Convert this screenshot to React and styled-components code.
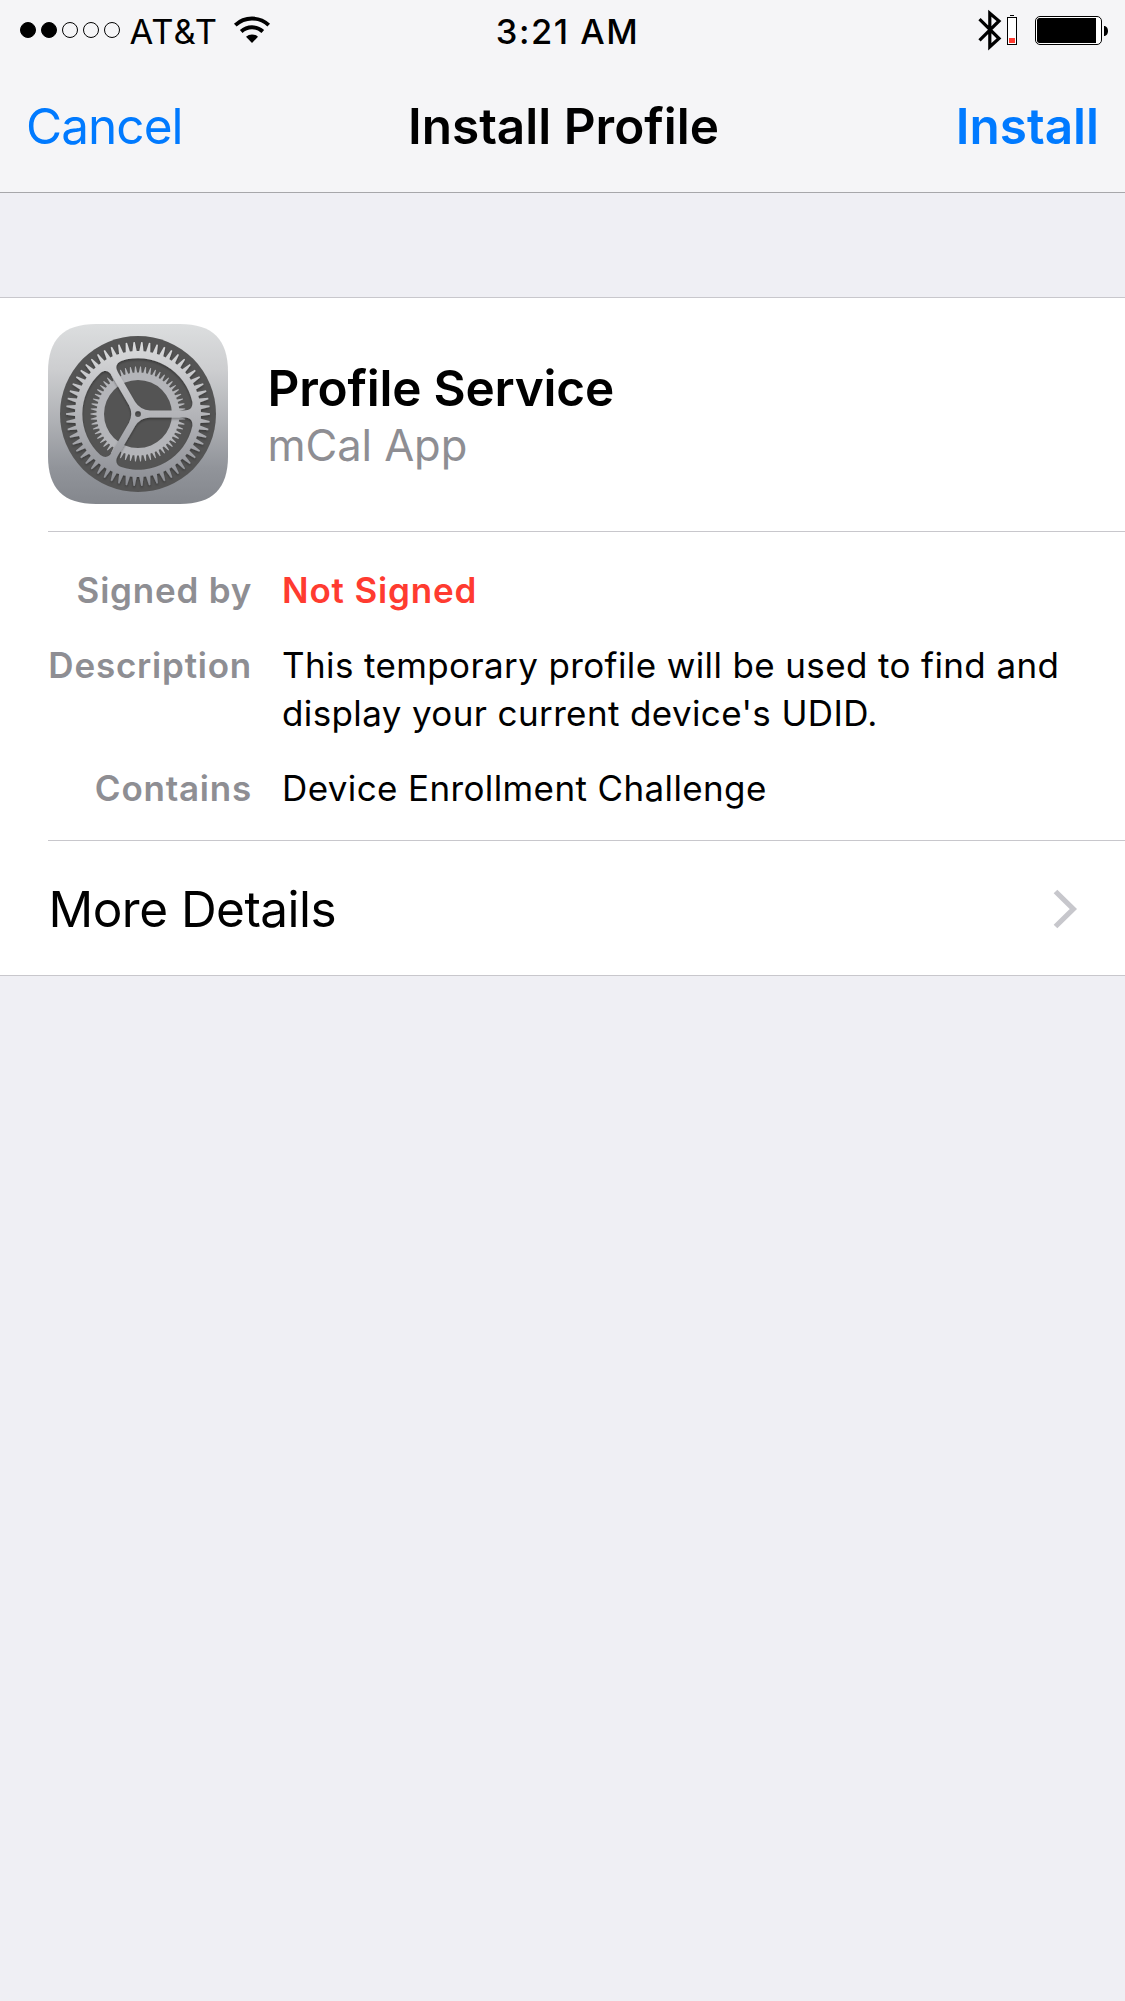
import React from "react";
import styled, { createGlobalStyle } from "styled-components";

const GlobalStyle = createGlobalStyle`
  html, body { margin: 0; padding: 0; background: #efeff4; }
  *, *::before, *::after { box-sizing: border-box; }
  button { border: 0; margin: 0; background: none; font: inherit; color: inherit; text-align: inherit; }
`;

const Screen = styled.div`
  width: 1125px;
  height: 2001px;
  background: #efeff4;
  color: #000;
  font-family: Inter, "Liberation Sans", sans-serif;
  font-variant-ligatures: none;
`;

const Header = styled.header`
  background: #f5f5f7;
  border-bottom: 1px solid #a7a7aa;
  height: 193px;
`;

const StatusBar = styled.div`
  display: grid;
  grid-template-columns: 1fr auto 1fr;
  align-items: center;
  height: 60px;
  padding: 0 17px 0 20px;
  font-size: 34.5px;
  line-height: 42px;
`;

const StatusLeft = styled.div`
  display: flex;
  align-items: center;
`;

const SignalDots = styled.div`
  display: flex;
  gap: 5px;
  margin-right: 9.5px;
`;

const Dot = styled.span`
  width: 16px;
  height: 16px;
  border-radius: 50%;
  border: 1px solid #000;
  background: ${(p) => (p.$on ? "#000" : "transparent")};
`;

const Carrier = styled.span`
  letter-spacing: 1px;
  padding-top: 3px;
  margin-right: 14.5px;
`;

const Clock = styled.time`
  font-weight: 550;
  letter-spacing: 1.5px;
  padding: 3px 0 0 7px;
`;

const StatusRight = styled.div`
  display: flex;
  justify-content: flex-end;
  align-items: center;
`;

const NavBar = styled.nav`
  display: grid;
  grid-template-columns: 1fr auto 1fr;
  align-items: center;
  height: 132px;
  padding: 0 26px;
  font-size: 49.5px;
  line-height: 60px;
`;

const NavButton = styled.button`
  padding: 0;
  color: #007aff;
  justify-self: ${(p) => (p.$primary ? "end" : "start")};
  font-weight: ${(p) => (p.$primary ? 600 : 400)};
  letter-spacing: ${(p) => (p.$primary ? "0" : "-0.95px")};
`;

const Title = styled.h1`
  margin: 0;
  padding-left: 2px;
  font-size: inherit;
  font-weight: 600;
`;

const Group = styled.section`
  margin-top: 104px;
  background: #fff;
  border-top: 1px solid #c8c7cc;
  border-bottom: 1px solid #c8c7cc;
`;

const Inset = styled.div`
  margin-left: 48px;
  border-bottom: ${(p) => (p.$last ? "0" : "1px solid #c8c7cc")};
`;

const Summary = styled(Inset)`
  display: flex;
  align-items: center;
  gap: 39.5px;
  height: 234px;
  padding-bottom: 1px;
`;

const Name = styled.h2`
  margin: 0 0 2px;
  font-size: 49.5px;
  font-weight: 600;
  line-height: 60px;
  letter-spacing: -0.22px;
`;

const Organization = styled.p`
  margin: 0;
  color: #8e8e93;
  font-size: 43.5px;
  line-height: 50px;
  letter-spacing: -0.08px;
`;

const Facts = styled(Inset).attrs({ as: "dl" })`
  display: grid;
  grid-template-columns: 204px 1fr;
  column-gap: 30px;
  row-gap: 27px;
  margin-top: 0;
  margin-bottom: 0;
  padding: 34px 40px 28px 0;
  font-size: 35px;
  line-height: 48px;
`;

const Label = styled.dt`
  color: #8e8e93;
  font-weight: 600;
  letter-spacing: 0.78px;
  text-align: right;
`;

const Value = styled.dd`
  margin: 0;
  color: ${(p) => (p.$warning ? "#ff3b30" : "#000")};
  font-weight: ${(p) => (p.$warning ? 600 : 400)};
  letter-spacing: ${(p) => (p.$warning ? "0.84px" : "0.38px")};
`;

const MoreRow = styled(Inset).attrs({ as: "button" })`
  display: flex;
  width: 1077px;
  align-items: center;
  justify-content: space-between;
  height: 134px;
  padding: 2px 47px 0 0.5px;
  font-size: 49.5px;
  line-height: 60px;
  letter-spacing: -0.52px;
`;

const WifiIcon = () => (
  <svg width="38" height="28" viewBox="0 0 38 28">
    <g fill="none" stroke="#000" strokeWidth="3.9">
      <path d="M2.3 9.1A24.5 24.5 0 0 1 35.7 9.1" />
      <path d="M8.2 15.5A15.8 15.8 0 0 1 29.8 15.5" />
    </g>
    <path d="M19 27L13 20.8A8.7 8.7 0 0 1 25 20.8Z" />
  </svg>
);

const BluetoothIcon = () => (
  <svg width="24" height="42" viewBox="0 0 24 42">
    <path
      d="M1.5 10.2L21 29.5L11.8 37.8V4.2L21 12L1.5 31.3"
      fill="none"
      stroke="#000"
      strokeWidth="3.2"
    />
  </svg>
);

const AccessoryBattery = styled.svg`
  margin: 0 18px 0 5px;
`;

const LowBatteryIcon = () => (
  <AccessoryBattery width="10" height="30" viewBox="0 0 10 30">
    <path d="M3 0h4v1H3z" />
    <rect x="0.5" y="2.5" width="9" height="27" fill="#fff" stroke="#000" />
    <rect x="2" y="23" width="6" height="5" fill="#ff3b30" />
  </AccessoryBattery>
);

const BatteryIcon = () => (
  <svg width="73" height="29" viewBox="0 0 73 29">
    <rect x="0.5" y="0.5" width="66" height="28" rx="4.5" fill="#fff" stroke="#000" />
    <path d="M4.5 2H61V27H4.5A2.5 2.5 0 0 1 2 24.5V4.5A2.5 2.5 0 0 1 4.5 2Z" />
    <path d="M69 10C74.3 10 74.3 20 69 20Z" />
  </svg>
);

const ChevronIcon = () => (
  <svg width="26" height="42" viewBox="0 0 26 42">
    <path d="M3.5 3.5L21.3 21L3.5 38.5" fill="none" stroke="#c7c7cc" strokeWidth="5.2" />
  </svg>
);

const polar = (r, deg) => {
  const a = (deg * Math.PI) / 180;
  return `${(r * Math.cos(a)).toFixed(2)} ${(r * Math.sin(a)).toFixed(2)}`;
};

const toothedRim = (count, root, tip) => {
  const step = 360 / count;
  const points = [];
  for (let i = 0; i < count; i += 1) {
    const a = i * step;
    points.push(
      polar(root, a - step * 0.31),
      polar(tip, a - step * 0.09),
      polar(tip, a + step * 0.09),
      polar(root, a + step * 0.31)
    );
  }
  return `M${points.join("L")}Z`;
};

const disc = (r) => `M${r} 0A${r} ${r} 0 1 0 ${-r} 0A${r} ${r} 0 1 0 ${r} 0Z`;

// One opening between two spokes, with rounded corners at the rim and the hub.
const opening = (start) => {
  const from = (x, y) => polar(Math.hypot(x, y), start + (Math.atan2(y, x) * 180) / Math.PI);
  const to = (x, y) => polar(Math.hypot(x, y), start + 120 - (Math.atan2(y, x) * 180) / Math.PI);
  return [
    `M${from(12, 3.5)}`,
    `L${from(46, 3.5)}`,
    `C${from(52, 3.5)} ${from(54.8, 6)} ${from(54.4, 12)}`,
    `A55.7 55.7 0 0 1 ${to(54.4, 12)}`,
    `C${to(54.8, 6)} ${to(52, 3.5)} ${to(46, 3.5)}`,
    `L${to(12, 3.5)}`,
    `Q${polar(4.5, start + 60)} ${from(12, 3.5)}Z`,
  ].join("");
};

const INNER_GEAR = toothedRim(58, 41.5, 47.5) + disc(34);
const OUTER_GEAR =
  toothedRim(58, 63, 72) + opening(0) + opening(120) + opening(240) + disc(3);

const SettingsIcon = () => (
  <svg width="180" height="180" viewBox="0 0 180 180">
    <defs>
      <linearGradient id="metal" gradientUnits="userSpaceOnUse" x1="0" y1="0" x2="0" y2="180">
        <stop offset="0" stopColor="#dcdedf" />
        <stop offset="0.25" stopColor="#cdced0" />
        <stop offset="0.55" stopColor="#aeb0b4" />
        <stop offset="0.8" stopColor="#91949a" />
        <stop offset="1" stopColor="#84878d" />
      </linearGradient>
      <linearGradient id="gear" gradientUnits="userSpaceOnUse" x1="0" y1="-72" x2="0" y2="72">
        <stop offset="0" stopColor="#dadbdc" />
        <stop offset="0.5" stopColor="#b4b5b9" />
        <stop offset="1" stopColor="#8b8d93" />
      </linearGradient>
      <filter id="lift" x="-10%" y="-10%" width="120%" height="125%">
        <feDropShadow dx="0" dy="1.5" stdDeviation="1.3" floodColor="#000" floodOpacity="0.35" />
      </filter>
    </defs>
    <path
      d="M0 48C0 15.300 15.300 0 48 0H132C164.700 0 180 15.300 180 48V132C180 164.700 164.700 180 132 180H48C15.300 180 0 164.700 0 132Z"
      fill="url(#metal)"
    />
    <g transform="translate(90 90)" fillRule="evenodd">
      <circle r="78" fill="#545454" />
      <path d={INNER_GEAR} fill="#b4b5b9" />
      <path d={OUTER_GEAR} fill="url(#gear)" filter="url(#lift)" />
    </g>
  </svg>
);

const FACTS = [
  { label: "Signed by", value: "Not Signed", warning: true },
  {
    label: "Description",
    value: "This temporary profile will be used to find and display your current device's UDID.",
  },
  { label: "Contains", value: "Device Enrollment Challenge" },
];

export default function App() {
  return (
    <>
      <GlobalStyle />
      <Screen>
        <Header>
          <StatusBar>
            <StatusLeft>
              <SignalDots>
                {[1, 2, 3, 4, 5].map((level) => (
                  <Dot key={level} $on={level <= 2} />
                ))}
              </SignalDots>
              <Carrier>AT&amp;T</Carrier>
              <WifiIcon />
            </StatusLeft>
            <Clock>3:21 AM</Clock>
            <StatusRight>
              <BluetoothIcon />
              <LowBatteryIcon />
              <BatteryIcon />
            </StatusRight>
          </StatusBar>
          <NavBar>
            <NavButton>Cancel</NavButton>
            <Title>Install Profile</Title>
            <NavButton $primary>Install</NavButton>
          </NavBar>
        </Header>
        <Group>
          <Summary>
            <SettingsIcon />
            <div>
              <Name>Profile Service</Name>
              <Organization>mCal App</Organization>
            </div>
          </Summary>
          <Facts>
            {FACTS.map((fact) => (
              <React.Fragment key={fact.label}>
                <Label>{fact.label}</Label>
                <Value $warning={fact.warning}>{fact.value}</Value>
              </React.Fragment>
            ))}
          </Facts>
          <MoreRow $last>
            More Details
            <ChevronIcon />
          </MoreRow>
        </Group>
      </Screen>
    </>
  );
}
